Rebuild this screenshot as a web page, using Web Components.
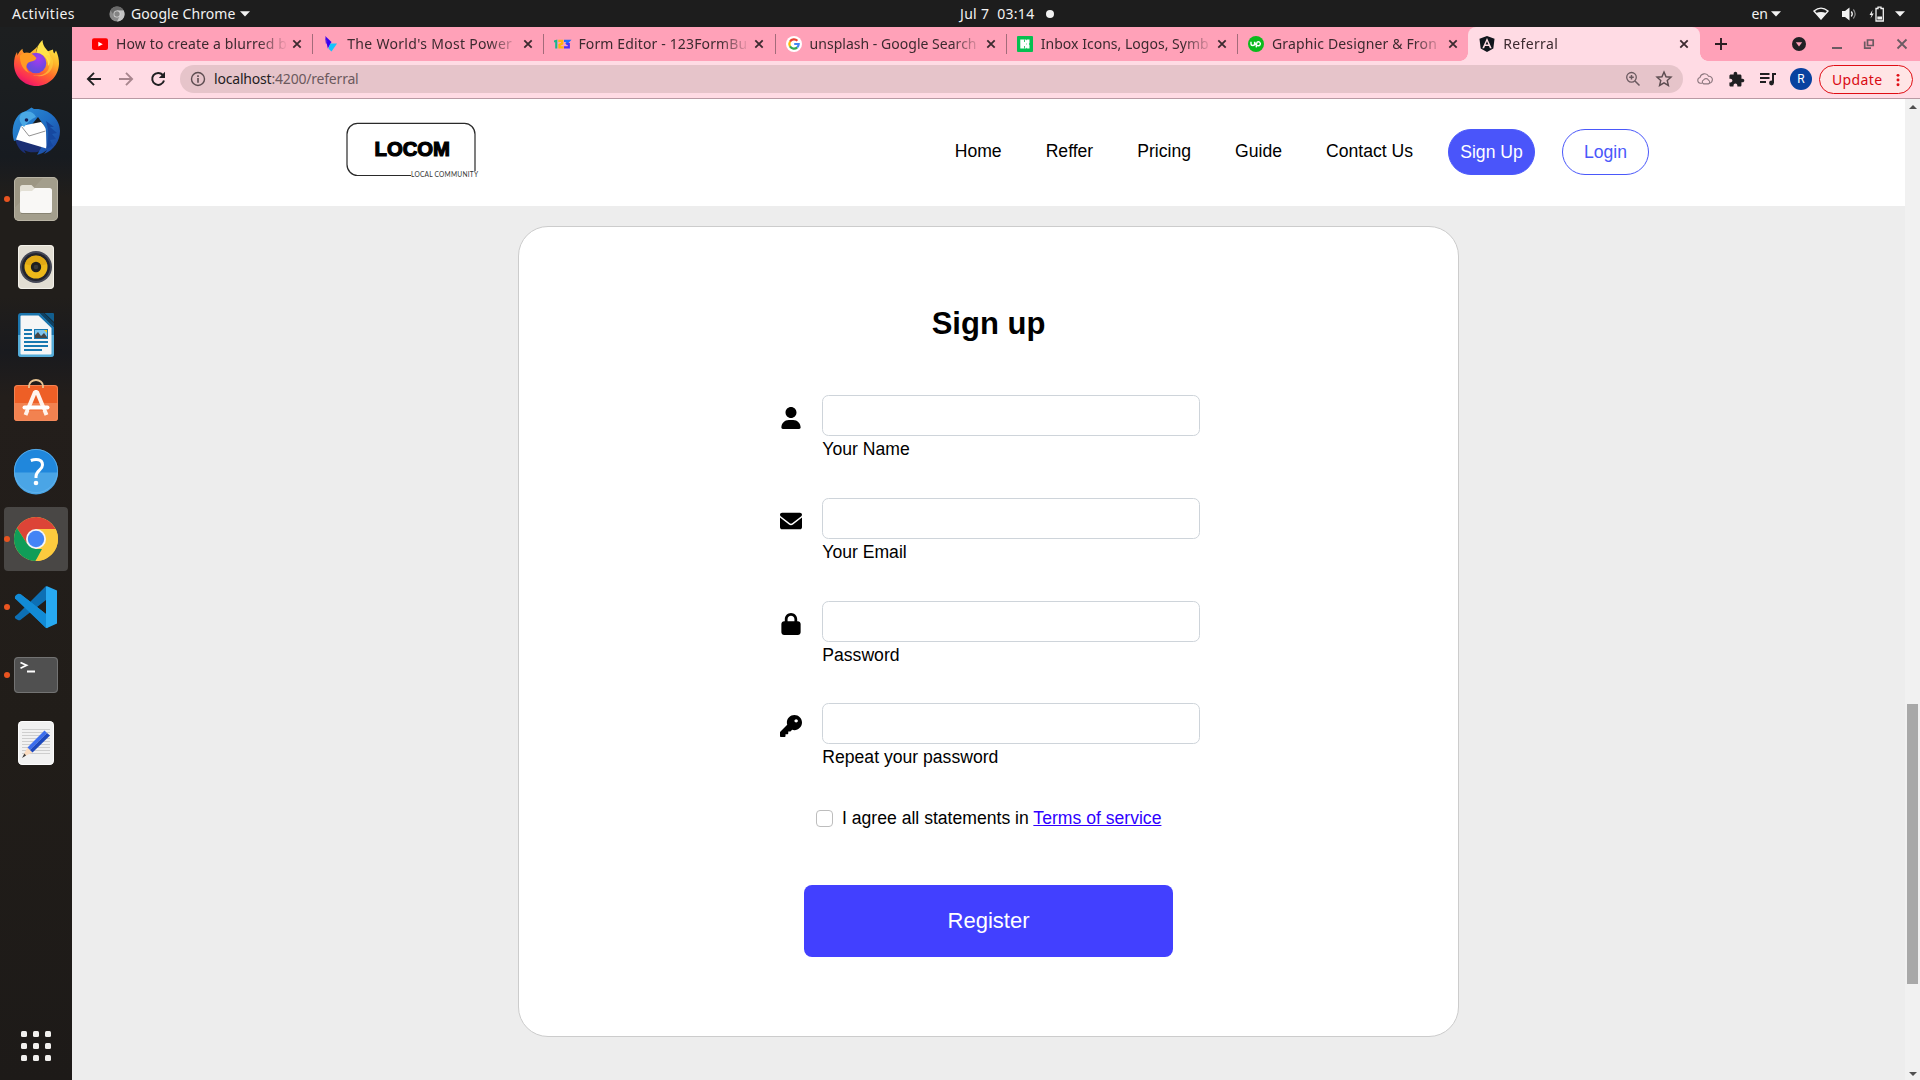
<!DOCTYPE html>
<html lang="en">
<head>
<meta charset="utf-8">
<title>Referral</title>
<style>
  html, body { margin: 0; padding: 0; width: 1920px; height: 1080px; overflow: hidden; background: #1d1d1d; }
</style>
</head>
<body>
<desktop-shell></desktop-shell>
<script>
const define = (name, html, setup) => {
  const tpl = document.createElement('template');
  tpl.innerHTML = html;
  customElements.define(name, class extends HTMLElement {
    connectedCallback() {
      if (this.shadowRoot) return;
      const root = this.attachShadow({ mode: 'open' });
      root.appendChild(tpl.content.cloneNode(true));
      if (setup) setup.call(this, root);
    }
  });
};

/* System text: tracks its letters so that a run takes the advance given in "fit". */
define('ui-text', `
<style>
  :host { display: block; flex: none; height: 20px; font: 14px/20px "Noto Sans", "Open Sans", sans-serif; white-space: nowrap; }
  span { display: inline-block; white-space: pre; }
</style><span><slot></slot></span>`, function (root) {
  const fit = parseFloat(this.getAttribute('fit'));
  if (!fit) return;
  const span = root.querySelector('span');
  const n = this.textContent.length;
  const w = span.getBoundingClientRect().width;
  span.style.letterSpacing = ((fit - w) / n).toFixed(3) + 'px';
});

const ICONS = {
  /* dock */
  firefox: `<svg viewBox="0 0 48 48"><defs>
    <linearGradient id="a" x1=".8" y1="0" x2=".25" y2="1"><stop offset="0" stop-color="#fff44f"/><stop offset=".35" stop-color="#ffb62a"/><stop offset=".6" stop-color="#ff6a2b"/><stop offset=".85" stop-color="#fb2d55"/><stop offset="1" stop-color="#e01070"/></linearGradient>
    <radialGradient id="b" cx=".6" cy=".3" r=".8"><stop offset="0" stop-color="#a63af0"/><stop offset=".6" stop-color="#7048e0"/><stop offset="1" stop-color="#5b51d8"/></radialGradient></defs>
    <path fill="url(#a)" d="M30.500 1C27 4.500 24.500 8 24.600 12.500C27 12.500 29 13 31 14L41 10.500C41 12 41.500 13.500 42.300 14.500L44 11.500C46 16 47.200 20 47 25C46.500 37.500 36.500 47 24.500 47C12 47 2 37.500 2 25C2 20 3 16 5 13L5.600 16.500C6.200 14 8 11.500 10.500 9.700C10.400 11.500 11 13 12.200 14.100C14 13.500 16 13.700 18 14L24 9Z"/>
    <path fill="#ffe34a" d="M30.500 1C26 5.500 24 10 25.500 14.500C33 15.500 36.500 20.500 36 27C40 22.500 39 15 34.500 10.500C31.800 7.600 30.600 4.500 30.500 1Z"/>
    <circle cx="24" cy="24" r="10.300" fill="url(#b)"/>
    <path fill="#ff9b22" d="M8 16.500C12 12.500 18 13 22 16.500L24.500 19C23 23 18 21.500 15.500 24.500C13.200 27.500 14.500 31.500 18 34C11 32 7.500 24 8 16.500Z"/>
    <path fill="#ffd23f" opacity=".6" d="M33 17C38 20 39 28 35 32.500C31 37 24 37.500 19 35C30 41 42 34 41 22C40 18 37 15 33 17Z"/></svg>`,
  thunderbird: `<svg viewBox="0 0 48 48"><defs><linearGradient id="a" x1="0" y1="0" x2="1" y2="1"><stop offset="0" stop-color="#2f93d8"/><stop offset=".5" stop-color="#1f6fc5"/><stop offset="1" stop-color="#1c3f9a"/></linearGradient></defs>
    <path fill="#1b2f74" d="M3 30C4 39 9 45 14 46.500L12 43C18 46.500 26 46 33 42L8 26Z"/>
    <path fill="url(#a)" d="M14 4L19.500 0.500L22 2C36 1 48 11 48 24C48 34 42 43 32 47L35 43C30 47 26 47.500 25 48L29 41L33 20L26 10L8 32L2 34C-1 24 1 12 9 6Z"/>
    <path fill="#fff" d="M9 19L29 15C32 18 34 21 34 24L34.500 41.500L4 32.500Z"/>
    <path fill="none" stroke="#777" stroke-width=".8" d="M9.500 19.500L17 29L33.500 24"/>
    <path fill="#4aa8e4" d="M10 6C6 10 7 15 12 20C15 16 19 12 24 10C22 5 16 3 10 6Z"/>
    <circle cx="14.500" cy="13" r="1.800" fill="#14205a"/>
    <path fill="#1648a0" d="M34 14L42 20L38 20L45 26L40 27L44 32L38 33L41 39L34 42C37 32 37 23 34 14Z"/></svg>`,
  files: `<svg viewBox="0 0 48 48"><rect x="2" y="2" width="44" height="44" rx="5" fill="#9c9683"/><rect x="2.500" y="2.500" width="43" height="43" rx="4.500" fill="none" stroke="#b9b4a5"/><path fill="#a9a392" d="M31 3H42Q45 3 45 6V42Q45 45 42 45H3L2.500 33Z" opacity=".6"/>
    <path fill="#e3e0d5" d="M8 12.500Q8 10 10.500 10H19.500L23.500 14H38V22H8Z"/><path fill="#f9f8f6" d="M8 18Q8 16 10 16H20L23 13H37.500Q40 13 40 15.500V35.500Q40 38 37.500 38H10.500Q8 38 8 35.500Z"/><path fill="none" stroke="#7d7868" stroke-width=".7" d="M9 38.500H39"/></svg>`,
  music: `<svg viewBox="0 0 48 48"><rect x="6" y="2" width="36" height="44" rx="4" fill="#e2ded3"/><rect x="6.500" y="2.500" width="35" height="43" rx="3.500" fill="none" stroke="#f3f1ea"/><circle cx="24" cy="24" r="16" fill="#454856"/><circle cx="24" cy="24" r="14" fill="#23242c"/><circle cx="24" cy="24" r="11.500" fill="#edb91a"/><path d="M13 21A11.500 11.500 0 0 1 35 21L24 24Z" fill="#d89f12" opacity=".6"/><circle cx="24" cy="24" r="5.200" fill="#1f1f1f"/><circle cx="24" cy="24" r="2.300" fill="#393939"/></svg>`,
  writer: `<svg viewBox="0 0 48 48"><path fill="#1b75ad" d="M6 5Q6 2 9 2H28L42 16V43Q42 46 39 46H9Q6 46 6 43Z"/><path fill="#55acd8" d="M6 24H42V43Q42 46 39 46H9Q6 46 6 43Z"/><path fill="#f6f6f6" d="M8.500 5.500Q8.500 4.500 9.500 4.500H26.500L39.500 17V42.500Q39.500 43.500 38.500 43.500H9.500Q8.500 43.500 8.500 42.500Z"/><path fill="#125e8e" d="M32.500 2H41Q42 2 42 3V11Z"/><path fill="#0d4163" d="M28 2L42 16V12L32 2Z"/>
    <path stroke="#1878b0" stroke-width="2" d="M12 19H20M12 23H20M12 27H20M12 31H36M12 35H36M12 39H30"/><rect x="22" y="18" width="14" height="10" fill="#1878b0"/><rect x="23" y="19" width="12" height="8" fill="#7cc4ee"/><path fill="#f5c518" d="M32 19H35V22Z"/><path fill="#454545" d="M23 27V24L26 21L29 25L32 22L35 26V27Z"/></svg>`,
  software: `<svg viewBox="0 0 48 48"><path fill="none" stroke="#e9c493" stroke-width="1.800" d="M17 10V7A7 6 0 0 1 31 7V10"/><rect x="2" y="6" width="44" height="36" rx="3.500" fill="#ee5f26"/><path fill="#f28250" d="M2 24H46V38.500Q46 42 42.500 42H5.500Q2 42 2 38.500Z"/><rect x="2.500" y="6.500" width="43" height="35" rx="3" fill="none" stroke="#f38d60" stroke-width=".8"/><path stroke="#fff3ec" stroke-width="4" fill="none" stroke-linejoin="bevel" d="M13.500 36L23 13H25L34.500 36"/><path stroke="#fff" stroke-width="4" stroke-linecap="round" d="M12.500 28.500H35.500"/><path stroke="#f0703a" stroke-width="1" d="M17 31.300H31" /><path fill="none" stroke="#e9c493" stroke-width="1.800" d="M17 9V6M31 9V6"/></svg>`,
  help: `<svg viewBox="0 0 48 48"><circle cx="24" cy="24" r="22" fill="#2087dc"/><path fill="#4aa5e6" d="M2 25.500H46A22 22 0 0 1 2 25.500Z"/><circle cx="24" cy="24" r="21.600" fill="none" stroke="#63b4ec" stroke-width=".8"/><path fill="none" stroke="#fff" stroke-width="3" d="M18.800 13.500C24 11.500 30.500 12 30.500 18C30.500 23 24 23.500 24 29.500V31"/><circle cx="24" cy="36" r="2.300" fill="#fff"/></svg>`,
  chrome: `<svg viewBox="0 0 48 48"><circle cx="24" cy="24" r="22" fill="#fdcb3e"/><path fill="#dc4437" d="M4.950 13A22 22 0 0 1 43.600 14H24L15.300 29Z"/><path fill="#109d58" d="M4.950 13L15.300 29L24 34H32.700L23.500 46A22 22 0 0 1 4.950 13Z"/><path fill="#fdcb3e" d="M24 14H43.600A22 22 0 0 1 23.500 46L32.700 29Z"/><circle cx="24" cy="24" r="10" fill="#f4f4f8"/><circle cx="24" cy="24" r="8.200" fill="#4384f5"/></svg>`,
  vscode: `<svg viewBox="0 0 48 48"><path fill="#0d6fb4" d="M34 3L6 31L2.900 33.500Q2.500 35 4 36L6.500 37.300Q7.800 37.600 9 36.500L34 17Z"/><path fill="#128bd6" d="M34 45L6 17Q4 15.500 3 16L3 16Q2.500 13.500 4 12L6.500 10.700Q7.800 10.400 9 11.500L34 31Z"/><path fill="#128bd6" d="M3 15.500L33 44Q34.500 45.500 35.500 45L34 31L9 11.500Q7.500 10.400 6 11.300L3.500 13.200Q2.500 14.200 3 15.500Z"/><path fill="#27a9f1" d="M34.500 3L45 7.500V40.500L35 45Q33.500 45 34 44V4Z"/></svg>`,
  terminal: `<svg viewBox="0 0 48 48"><rect x="2" y="6" width="44" height="36" rx="4" fill="#505050"/><rect x="2.500" y="6.500" width="43" height="35" rx="3.500" fill="none" stroke="#737373"/><path fill="none" stroke="#fff" stroke-width="1.800" d="M8.500 11.500L14.500 14.300L8.500 17.200M15 20.500H23"/></svg>`,
  editor: `<svg viewBox="0 0 48 48"><rect x="6" y="2" width="36" height="44" rx="4.500" fill="#f1f1f1"/><rect x="6.500" y="2.500" width="35" height="43" rx="4" fill="none" stroke="#fff" stroke-width=".8"/><path stroke="#cecece" d="M10 10.500H38M10 13.500H38M10 16.500H38M10 19.500H38M10 22.500H38M10 25.500H38M10 28.500H38M10 31.500H38M10 34.500H38"/><path fill="#fbdcc0" d="M15.500 28.500L20.500 33.500L12 37.500L11 36.500Z"/><path fill="#3a3a3a" d="M12.500 34.500L14 36.500L10 39Z"/><path fill="#3c6eee" d="M15.500 28.500L32.500 11.500L35 14L18 31Z"/><path fill="#1d49be" d="M18 31L35 14L38 16.500L20.500 33.500Z"/></svg>`,
  /* shell */
  chromeGrey: `<svg viewBox="0 0 16 16"><circle cx="8" cy="8" r="7.600" fill="#8a8a8a"/><path fill="#6a6a6a" d="M1.400 4.200A7.600 7.600 0 0 1 14.700 4.500H8L5 9.500Z"/><path fill="#c4c4c4" d="M8 4.500H14.700A7.600 7.600 0 0 1 8 15.600L11 9.600Z"/><circle cx="8" cy="8" r="3.500" fill="#d8d8d8"/><circle cx="8" cy="8" r="2.700" fill="#848484"/></svg>`,
  caret: `<svg viewBox="0 0 10 6"><path fill="#f2f2f2" d="M0 .3H10L5 5.600Z"/></svg>`,
  wifi: `<svg viewBox="0 0 16 14"><path fill="none" stroke="#f2f2f2" stroke-width="1.400" d="M1 4Q8 -1.800 15 4L8 12Z"/><path fill="#f2f2f2" d="M3 6Q8 4 13 6L8 12.500Z"/></svg>`,
  volume: `<svg viewBox="0 0 16 16"><path fill="#f2f2f2" d="M1 5H4L8.500 1.500V14.500L4 11H1Z"/><path fill="none" stroke="#f2f2f2" stroke-width="1.300" d="M10.300 5.500Q12.300 8 10.300 10.500"/><path fill="none" stroke="#8d8d8d" stroke-width="1.200" d="M12.300 3.500Q16 8 12.300 12.500"/></svg>`,
  battery: `<svg viewBox="0 0 16 16"><path fill="#f2f2f2" d="M3.500 4L0.500 9H2.500L1.500 12.500L4.800 7.500H2.800Z"/><path fill="none" stroke="#f2f2f2" stroke-width="1.300" d="M7 2.500H9V1.200H12V2.500H14.300V15H7Z"/><rect x="8.300" y="10.500" width="4.700" height="3" fill="#f2f2f2"/></svg>`,
  /* favicons */
  youtube: `<svg viewBox="0 0 16 16"><rect y="2.300" width="16" height="11.700" rx="2" fill="#f00"/><path fill="#fff" d="M6.300 5.800L10.800 8.200L6.300 10.600Z"/></svg>`,
  arrowFav: `<svg viewBox="0 0 16 16"><path fill="#3a00f0" d="M2.200 0L8.500 6L4.800 12.500Z" /><path fill="#5a1fd8" d="M2 1.500L4.500 5.500L3 8.500Z"/><path fill="#13c4fb" d="M14 7.500L8.500 15.500L5.500 12.800L7.200 7.500Z"/></svg>`,
  form123: `<svg viewBox="0 0 16 16"><path fill="#17b78d" d="M0 4.500L3.300 3.500V12.500H1.200V6.300H0Z"/><path fill="none" stroke="#fdb50a" stroke-width="2.300" d="M4.300 4.900H8.200V7.500L5.500 9V11.400H9.700"/><path fill="none" stroke="#1a6cff" stroke-width="2.200" d="M10 4.800H15L12 8"/><path fill="none" stroke="#4a32f5" stroke-width="2.200" d="M12.500 8H14.800V11.400H10"/></svg>`,
  google: `<svg viewBox="0 0 16 16"><circle cx="8" cy="8" r="8" fill="#fff"/><path fill="none" stroke="#ea4335" stroke-width="2.200" d="M4 5.600A4.700 4.700 0 0 1 11.400 4.700"/><path fill="none" stroke="#fbbc05" stroke-width="2.200" d="M4 5.600A4.700 4.700 0 0 0 4 10.400"/><path fill="none" stroke="#34a853" stroke-width="2.200" d="M4 10.400A4.700 4.700 0 0 0 11.200 11.400"/><path fill="none" stroke="#4285f4" stroke-width="2.200" d="M8.200 8H12.700A4.700 4.700 0 0 1 11.200 11.400"/></svg>`,
  icons8: `<svg viewBox="0 0 16 16"><rect width="16" height="16" rx="1" fill="#05bf50"/><path fill="#fff" d="M3.300 3.600H7.200V12.400H3.300ZM7 3.600H9.200L9.600 4.600L10 3.600H12.500V7L11.800 8L12.500 9V12.400H10L9.600 11.400L9.200 12.400H7Z"/><path fill="#05bf50" d="M7 3.600H7.800V6H7ZM7 10H7.800V12.400H7ZM9.400 7.400H10V8.600H9.400Z"/></svg>`,
  upwork: `<svg viewBox="0 0 16 16"><circle cx="8" cy="8" r="8" fill="#0bba1c"/><path fill="none" stroke="#fff" stroke-width="1.400" d="M3 5.800V7.700A1.800 1.800 0 0 0 6.600 7.700V5.800Q7.500 9.500 9.500 9.600A2 2 0 1 0 9 6.300Q8.700 7 8.200 11.300"/></svg>`,
  angular: `<svg viewBox="0 0 16 16"><path fill="#11151c" d="M8 0L15.500 2.700L14.300 12.400L8 16L1.700 12.400L.5 2.700Z"/><path fill="#ffdce4" fill-rule="evenodd" d="M8 1.900L12.700 12.300H10.900L10 10H6L5.100 12.300H3.300ZM8 5.200L6.600 8.500H9.400Z"/></svg>`,
  /* browser controls */
  close: `<svg viewBox="0 0 16 16"><path stroke="#3c2a2f" stroke-width="1.800" d="M4.300 4.300L11.700 11.700M11.700 4.300L4.300 11.700"/></svg>`,
  closeGrey: `<svg viewBox="0 0 16 16"><path stroke="#6b5a62" stroke-width="1.800" d="M3.500 3.500L12.500 12.500M12.500 3.500L3.500 12.500"/></svg>`,
  plus: `<svg viewBox="0 0 16 16"><path stroke="#2b1d22" stroke-width="1.900" d="M8 2V14M2 8H14"/></svg>`,
  tabSearch: `<svg viewBox="0 0 16 16"><circle cx="8" cy="8" r="7" fill="#202024"/><path fill="#ffa1b8" d="M4.800 6.300H11.200L8 10.500Z"/></svg>`,
  minimize: `<svg viewBox="0 0 16 16"><path stroke="#6b5a62" stroke-width="2" d="M3 12H13"/></svg>`,
  restore: `<svg viewBox="0 0 16 16"><path fill="none" stroke="#6b5a62" stroke-width="1.700" d="M6.500 4H12.200V9.500H6.500ZM3.700 5.500V12.200H10"/></svg>`,
  back: `<svg viewBox="0 0 16 16"><path fill="none" stroke="#1f1f21" stroke-width="1.900" d="M15 8H2.500M8 1.800L1.900 8L8 14.200"/></svg>`,
  forward: `<svg viewBox="0 0 16 16"><path fill="none" stroke="#a8868e" stroke-width="1.900" d="M1 8H13.500M8 1.800L14.100 8L8 14.200"/></svg>`,
  reload: `<svg viewBox="0 0 16 16"><path fill="none" stroke="#1f1f21" stroke-width="2" d="M12.800 4A6 6 0 1 0 14 9.500"/><path fill="#1f1f21" d="M15 .8V7H8.800Z"/></svg>`,
  info: `<svg viewBox="0 0 16 16"><circle cx="8" cy="8" r="6.500" fill="none" stroke="#5c4c50" stroke-width="1.400"/><path stroke="#5c4c50" stroke-width="1.600" d="M8 7V11.700M8 4.300V6"/></svg>`,
  zoom: `<svg viewBox="0 0 16 16"><circle cx="6.500" cy="6.300" r="4.800" fill="none" stroke="#6b5a60" stroke-width="1.300"/><path stroke="#6b5a60" stroke-width="1.500" d="M10 10L14.500 14.500M6.500 4V8.600M4.200 6.300H8.800"/></svg>`,
  star: `<svg viewBox="0 0 16 16"><path fill="none" stroke="#5c4c50" stroke-width="1.300" d="M8 1.800L9.800 6L14.200 6.400L10.900 9.400L11.900 13.700L8 11.400L4.100 13.700L5.100 9.400L1.800 6.400L6.200 6Z"/></svg>`,
  cloud: `<svg viewBox="0 0 16 16"><path fill="none" stroke="#8c777e" stroke-width="1.100" d="M5 12.200H3.300A2.900 2.900 0 0 1 3 6.500A4.600 4.600 0 0 1 11.600 5.300A3.400 3.400 0 0 1 15.400 8.600Q15.300 11.500 12.700 12.200"/><path fill="none" stroke="#8c777e" stroke-width="1.100" d="M6.700 12.900A2 2 0 0 1 6.600 9.100A2.700 2.700 0 0 1 11.500 9.300A1.900 1.900 0 0 1 11.400 12.900Z"/></svg>`,
  puzzle: `<svg viewBox="0 0 24 24"><path fill="#1f1f21" d="M20.500 11H19V7c0-1.100-.9-2-2-2h-4V3.500C13 2.120 11.880 1 10.500 1S8 2.120 8 3.500V5H4c-1.100 0-1.990.9-1.990 2v3.800H3.500c1.490 0 2.700 1.210 2.700 2.700s-1.210 2.700-2.700 2.700H2V20c0 1.100.9 2 2 2h3.800v-1.500c0-1.490 1.210-2.700 2.700-2.700 1.490 0 2.700 1.210 2.700 2.700V22H17c1.100 0 2-.9 2-2v-4h1.500c1.380 0 2.500-1.120 2.500-2.500S21.880 11 20.500 11z"/></svg>`,
  playlist: `<svg viewBox="0 0 16 16"><path fill="none" stroke="#1f1f21" stroke-width="1.800" d="M0 3H9.500M0 7H9.500M0 11H6"/><path fill="none" stroke="#1f1f21" stroke-width="2" d="M16 3H13V12"/><circle cx="11.500" cy="12" r="2.400" fill="#1f1f21"/></svg>`,
  dots: `<svg viewBox="0 0 4 16"><g fill="#e00d14"><circle cx="2" cy="2.700" r="1.700"/><circle cx="2" cy="8" r="1.700"/><circle cx="2" cy="13.300" r="1.700"/></g></svg>`,
  /* form */
  user: `<svg viewBox="-32 0 512 512"><path d="M224 256c70.700 0 128-57.310 128-128s-57.300-128-128-128C153.300 0 96 57.310 96 128S153.300 256 224 256zM274.700 304H173.300C77.610 304 0 381.600 0 477.300c0 19.140 15.520 34.670 34.660 34.670h378.700C432.500 512 448 496.500 448 477.300C448 381.600 370.400 304 274.700 304z"/></svg>`,
  envelope: `<svg viewBox="0 0 512 512"><path d="M256 352c-16.530 0-33.060-5.422-47.160-16.410L0 173.200V400C0 426.500 21.490 448 48 448h416c26.510 0 48-21.490 48-48V173.200l-208.800 162.500C289.100 346.600 272.500 352 256 352zM16.290 145.300l212.200 165.100c16.190 12.600 38.870 12.600 55.060 0l212.200-165.100C505.100 137.300 512 125 512 112C512 85.490 490.500 64 464 64h-416C21.490 64 0 85.490 0 112C0 125 6.010 137.300 16.290 145.300z"/></svg>`,
  lock: `<svg viewBox="-32 0 512 512"><path d="M80 192V144C80 64.470 144.500 0 224 0C303.500 0 368 64.470 368 144V192H384C419.300 192 448 220.700 448 256V448C448 483.300 419.300 512 384 512H64C28.650 512 0 483.300 0 448V256C0 220.700 28.650 192 64 192H80zM144 192H304V144C304 99.820 268.200 64 224 64C179.800 64 144 99.820 144 144V192z"/></svg>`,
  key: `<svg viewBox="0 0 512 512"><path d="M282.300 343.700L248.100 376.100C244.500 381.500 238.400 384 232 384H192V424C192 437.300 181.300 448 168 448H128V488C128 501.300 117.300 512 104 512H24C10.750 512 0 501.300 0 488V408C0 401.600 2.529 395.500 7.029 391L168.300 229.700C162.900 212.800 160 194.700 160 176C160 78.800 238.800 0 336 0C433.200 0 512 78.800 512 176C512 273.200 433.200 352 336 352C317.300 352 299.200 349.100 282.300 343.700zM376 176C398.100 176 416 158.100 416 136C416 113.900 398.100 96 376 96C353.900 96 336 113.900 336 136C336 158.100 353.900 176 376 176z"/></svg>`
};

define('ui-icon', `
<style>
  :host { display: block; flex: none; width: var(--s, 16px); height: var(--h, var(--s, 16px)); }
  svg { display: block; width: 100%; height: 100%; overflow: visible; }
</style><div style="width:100%;height:100%"></div>`, function (root) {
  root.querySelector('div').innerHTML = ICONS[this.getAttribute('name')] || '';
});

define('top-bar', `
<style>
  :host { display: flex; flex: none; height: 27px; align-items: center; justify-content: space-between; background: #1d1d1d; color: #f2f2f2; }
  div { display: flex; align-items: center; height: 27px; }
  .l { padding-left: 12px; width: 908px; }
  .c { width: 560px; gap: 12px; padding-left: 40px; }
  .dot { width: 8px; height: 8px; border-radius: 50%; background: #f2f2f2; }
  .r { flex: 1; padding-left: 229.500px; }
</style>
<div class="l"><ui-text fit="63">Activities</ui-text><ui-icon name="chromeGrey" style="margin-left:34px"></ui-icon><ui-text fit="104.500" style="margin-left:6px">Google Chrome</ui-text><ui-icon name="caret" style="--s:10px;--h:6px;margin-left:4px"></ui-icon></div>
<div class="c"><ui-text fit="74.500">Jul 7  03:14</ui-text><span class="dot"></span></div>
<div class="r"><ui-text fit="16.500" style="margin-left:2px">en</ui-text><ui-icon name="caret" style="--s:10px;--h:6px;margin-left:3px"></ui-icon><ui-icon name="wifi" style="--h:14px;margin-left:32px"></ui-icon><ui-icon name="volume" style="margin-left:12px"></ui-icon><ui-icon name="battery" style="margin-left:12px"></ui-icon><ui-icon name="caret" style="--s:10px;--h:6px;margin-left:9.500px"></ui-icon></div>`);

define('dock-item', `
<style>
  :host { display: flex; flex: none; width: 64px; height: 64px; border-radius: 4px; align-items: center; justify-content: center; position: relative; --s: 48px; }
  :host([active]) { background: #494745; }
  i { display: none; position: absolute; left: 0; top: 29px; width: 6px; height: 6px; border-radius: 50%; background: #e95420; }
  :host([running]) i { display: block; }
</style><i></i><ui-icon></ui-icon>`, function (root) {
  const old = root.querySelector('ui-icon');
  const icon = document.createElement('ui-icon');
  icon.setAttribute('name', this.getAttribute('app'));
  old.replaceWith(icon);
});

define('app-dock', `
<style>
  :host { display: flex; flex: none; flex-direction: column; align-items: center; gap: 4px; width: 72px; padding-top: 4px; box-sizing: border-box;
    background: linear-gradient(#1d1f20 0, #1b1e20 60px, #171b20 130px, #211e1b 170px, #211e1b 270px, #191a1e 325px, #231e1b 370px, #211d19 700px, #1d1a18 100%); }
  .grid { margin-top: auto; margin-bottom: 19px; display: grid; grid-template-columns: repeat(3, 6px); gap: 6px; }
  .grid b { width: 6px; height: 6px; border-radius: 1.500px; background: #f1f0ee; }
</style>
<dock-item app="firefox"></dock-item><dock-item app="thunderbird"></dock-item><dock-item app="files" running></dock-item><dock-item app="music"></dock-item><dock-item app="writer"></dock-item><dock-item app="software"></dock-item><dock-item app="help"></dock-item><dock-item app="chrome" running active></dock-item><dock-item app="vscode" running></dock-item><dock-item app="terminal" running></dock-item><dock-item app="editor"></dock-item>
<div class="grid"><b></b><b></b><b></b><b></b><b></b><b></b><b></b><b></b><b></b></div>`);

define('browser-tab', `
<style>
  :host { display: flex; flex: none; box-sizing: border-box; width: 231.200px; height: 34px; align-items: center; padding-left: 11px; position: relative; color: #3c2a2f; }
  .t { width: 171px; margin-left: 8px; overflow: hidden; -webkit-mask-image: linear-gradient(90deg, #000 142px, transparent 172px); mask-image: linear-gradient(90deg, #000 142px, transparent 172px); }
  .x { margin-left: 2px; }
  hr { position: absolute; right: -1px; top: 7px; width: 1px; height: 20px; margin: 0; border: 0; background: #a36b7a; }
  :host([last]) hr, :host([active]) hr { display: none; }
  :host([active]) { background: #ffdbe4; border-radius: 8px 8px 0 0; width: 231.800px; }
  :host([active])::before, :host([active])::after { content: ""; position: absolute; bottom: 0; width: 8px; height: 8px; }
  :host([active])::before { left: -8px; background: radial-gradient(circle at 0 0, transparent 7.500px, #ffdbe4 8px); }
  :host([active])::after { right: -8px; background: radial-gradient(circle at 100% 0, transparent 7.500px, #ffdbe4 8px); }
</style><span class="f"></span><div class="t"><slot></slot></div><ui-icon class="x" name="close"></ui-icon><hr>`, function (root) {
  const icon = document.createElement('ui-icon');
  icon.setAttribute('name', this.getAttribute('fav'));
  root.querySelector('.f').replaceWith(icon);
});

define('tab-strip', `
<style>
  :host { display: flex; flex: none; height: 34px; align-items: center; background: #ffa1b8; padding-left: 9px; }
</style>
<browser-tab fav="youtube"><ui-text fit="171">How to create a blurred b</ui-text></browser-tab>
<browser-tab fav="arrowFav"><ui-text fit="165">The World's Most Power</ui-text></browser-tab>
<browser-tab fav="form123"><ui-text fit="169">Form Editor - 123FormBu</ui-text></browser-tab>
<browser-tab fav="google"><ui-text fit="167">unsplash - Google Search</ui-text></browser-tab>
<browser-tab fav="icons8"><ui-text fit="168">Inbox Icons, Logos, Symb</ui-text></browser-tab>
<browser-tab fav="upwork" last><ui-text fit="165">Graphic Designer &amp; Fron</ui-text></browser-tab>
<browser-tab fav="angular" active><ui-text fit="55">Referral</ui-text></browser-tab>
<ui-icon name="plus" style="margin-left:13px"></ui-icon>
<ui-icon name="tabSearch" style="margin-left:62px"></ui-icon>
<ui-icon name="minimize" style="margin-left:22px"></ui-icon>
<ui-icon name="restore" style="margin-left:16px"></ui-icon>
<ui-icon name="closeGrey" style="margin-left:17px"></ui-icon>`);

define('tool-bar', `
<style>
  :host { display: flex; flex: none; box-sizing: border-box; height: 38px; align-items: center; background: #ffdbe4; border-bottom: 1px solid #b99aa4; padding: 0 0 1px 14px; }
  .url { display: flex; align-items: center; box-sizing: border-box; width: 1503px; height: 28px; margin: 0 12px 0 14px; padding: 0 10px 0 10px; border-radius: 14px; background: #e6c4ca; }
  .path { display: flex; margin-left: 8px; margin-right: auto; }
  .av { display: flex; align-items: center; justify-content: center; width: 22px; height: 22px; border-radius: 50%; background: #0842a0; color: #fff; font: 12px/22px Roboto, sans-serif; margin-left: 14px; }
  .up { display: flex; align-items: center; box-sizing: border-box; width: 94px; height: 29px; margin: 1px 0 0 7px; border: 1px solid #e00d14; border-radius: 15px; background: #ffe5e5; color: #d90a12; padding-left: 12px; }
</style>
<ui-icon name="back"></ui-icon><ui-icon name="forward" style="margin-left:16px"></ui-icon><ui-icon name="reload" style="margin-left:16px"></ui-icon>
<div class="url"><ui-icon name="info"></ui-icon><div class="path"><ui-text fit="57.500" style="color:#241c1e">localhost</ui-text><ui-text fit="87" style="color:#6b595d">:4200/referral</ui-text></div><ui-icon name="zoom"></ui-icon><ui-icon name="star" style="margin-left:14px;--s:18px"></ui-icon></div>
<ui-icon name="cloud" style="margin-left:2px"></ui-icon><ui-icon name="puzzle" style="margin-left:15px;--s:17px"></ui-icon><ui-icon name="playlist" style="margin-left:15px"></ui-icon>
<span class="av">R</span><div class="up"><ui-text fit="50.500">Update</ui-text><ui-icon name="dots" style="--s:4px;--h:14px;margin-left:13px"></ui-icon></div>`);

define('brand-logo', `
<style>
  :host { display: block; flex: none; width: 134px; height: 58px; }
  svg { display: block; }
</style>
<svg width="134" height="58" viewBox="346 121 134 58">
  <path fill="none" stroke="#2a2a2a" stroke-width="1.200" d="M411 175.500H357.500A10.500 11 0 0 1 347 164.500V134.300A10.500 11 0 0 1 357.500 123.300H464.500A10.500 11 0 0 1 475 134.300V171"/>
  <text x="374.500" y="156.200" textLength="75.500" lengthAdjust="spacingAndGlyphs" font-family="Liberation Sans, sans-serif" font-weight="700" font-size="20.500" stroke="#000" stroke-width="1.200">LOCOM</text>
  <text x="411" y="177.400" textLength="67" lengthAdjust="spacing" font-family="Lato, sans-serif" font-size="6.600" fill="#333">LOCAL COMMUNITY</text>
</svg>`);

define('pill-button', `
<style>
  :host { display: flex; flex: none; box-sizing: border-box; width: 87px; height: 46px; border: 1px solid #4a58fa; border-radius: 23px; align-items: center; justify-content: center; color: #4a58fa; margin-bottom: 1px; }
  :host([filled]) { background: #4a55fa; color: #fff; }
</style><slot></slot>`);

define('site-header', `
<style>
  :host { display: flex; flex: none; box-sizing: border-box; height: 107px; align-items: center; background: #fff; color: #000; padding: 0 256px 0 274px; font: 17.600px/26px "Liberation Sans", Arial, sans-serif; }
  nav { display: flex; align-items: center; gap: 44px; margin-left: auto; margin-right: 35px; margin-bottom: 3px; }
</style>
<brand-logo style="margin-top:-5px"></brand-logo>
<nav><span>Home</span><span>Reffer</span><span>Pricing</span><span>Guide</span><span>Contact Us</span></nav>
<pill-button filled>Sign Up</pill-button><pill-button style="margin-left:27px">Login</pill-button>`);

define('form-field', `
<style>
  :host { display: flex; height: 67px; margin-bottom: 35.700px; --s: 22px; }
  .i { margin: 12px 20px 0 0; }
  input { display: block; box-sizing: border-box; width: 378px; height: 41px; margin: 0; border: 1px solid #ced4da; border-radius: 6.500px; background: #fff; outline: 0; }
  label { display: block; line-height: 26.400px; padding-left: .3px; }
</style><div class="i"></div><div><input type="text"><label><slot></slot></label></div>`, function (root) {
  const icon = document.createElement('ui-icon');
  icon.setAttribute('name', this.getAttribute('icon'));
  root.querySelector('.i').appendChild(icon);
});

define('signup-card', `
<style>
  :host { display: block; box-sizing: border-box; width: 941px; height: 811px; border: 1px solid #ccc; border-radius: 30px; background: #fff; padding-top: 77px; color: #000; font: 17.600px/26.400px "Liberation Sans", Arial, sans-serif; }
  h1 { margin: 0 0 51.200px; text-align: center; font-size: 31px; line-height: 40px; font-weight: 700; }
  .fields { padding-left: 261px; }
  .agree { display: flex; align-items: center; padding-left: 297px; margin-top: -1px; }
  .box { width: 15px; height: 15px; border: 1px solid #bdbdbd; border-radius: 4px; margin-right: 9px; }
  a { color: #2f00ff; text-decoration: underline; }
  button { display: block; width: 369px; height: 72px; margin: 53.800px 0 0 285px; padding: 0; border: 0; border-radius: 8px; background: #4240ff; color: #fff; font: 22px/72px "Liberation Sans", Arial, sans-serif; }
</style>
<h1>Sign up</h1>
<div class="fields"><form-field icon="user">Your Name</form-field><form-field icon="envelope">Your Email</form-field><form-field icon="lock">Password</form-field><form-field icon="key">Repeat your password</form-field></div>
<div class="agree"><span class="box"></span><span>I agree all statements in <a>Terms of service</a></span></div>
<button>Register</button>`);

define('scroll-bar', `
<style>
  :host { display: flex; flex: none; flex-direction: column; align-items: center; width: 15px; box-sizing: border-box; background: #f1f1f1; padding: 6px 0 4px; }
  svg { display: block; flex: none; }
  .thumb { width: 11px; height: 280px; background: #a8a8a8; margin: 595px 0 auto; }
</style>
<svg width="8" height="4" viewBox="0 0 8 4"><path fill="#505050" d="M4 0L8 4H0Z"/></svg><div class="thumb"></div><svg width="8" height="4" viewBox="0 0 8 4"><path fill="#505050" d="M4 4L0 0H8Z"/></svg>`);

define('web-page', `
<style>
  :host { display: flex; flex: 1; min-height: 0; background: #ededed; }
  .view { display: flex; flex: 1; flex-direction: column; overflow: hidden; }
  signup-card { margin: 20px 0 0 446px; }
</style>
<div class="view"><site-header></site-header><signup-card></signup-card></div><scroll-bar></scroll-bar>`);

define('browser-window', `
<style>:host { display: flex; flex: 1; flex-direction: column; min-width: 0; }</style>
<tab-strip></tab-strip><tool-bar></tool-bar><web-page></web-page>`);

define('desktop-shell', `
<style>
  :host { display: flex; flex-direction: column; width: 1920px; height: 1080px; overflow: hidden; }
  .row { display: flex; flex: 1; min-height: 0; }
</style>
<top-bar></top-bar><div class="row"><app-dock></app-dock><browser-window></browser-window></div>`);
</script>
</body>
</html>
